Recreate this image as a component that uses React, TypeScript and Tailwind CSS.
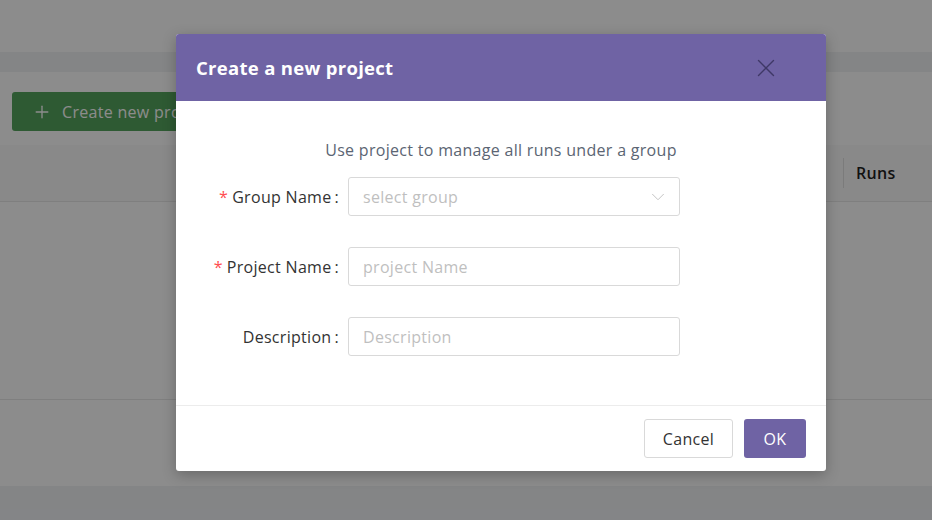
import { Plus, X, ChevronDown } from "lucide-react"

const font = { fontFamily: '"Open Sans", "Noto Sans", sans-serif' }

function Field({ label, required, placeholder, select }: { label: string; required?: boolean; placeholder: string; select?: boolean }) {
  return (
    <div className="flex items-center h-[39px]">
      <div className="w-[172px] pr-[8px] text-right text-[16px] text-[#333]">
        {required && <span className="text-[#ff4d4f] mr-[4px]">*</span>}
        {label}
        <span className="ml-[3px] mr-[1px]">:</span>
      </div>
      <div className="w-[332px] h-[39px] border border-[#d9d9d9] rounded-[3px] flex items-center justify-between pl-[14px] pr-[10px] text-[16px] text-[#bfbfbf]">
        <span>{placeholder}</span>
        {select && <ChevronDown className="w-[22px] h-[22px] text-[#bfbfbf]" strokeWidth={1} />}
      </div>
    </div>
  )
}

export default function App() {
  return (
    <div className="relative w-[932px] h-[520px] overflow-hidden bg-[#f0f2f5] tracking-[0.3px]" style={font}>
      {/* page under the mask */}
      <div className="h-[52px] bg-white"></div>
      <div className="h-[20px]"></div>
      <div className="bg-white h-[414px]">
        <div className="pt-[20px] px-[12px]">
          <button className="h-[39px] w-[200px] bg-[#55a45d] rounded-[3px] flex items-center gap-[10px] pl-[20px] text-white text-[16px] whitespace-nowrap">
            <Plus className="w-[20px] h-[20px]" strokeWidth={1.6} />
            <span>Create new project</span>
          </button>
        </div>
        <div className="mt-[14px] h-[57px] bg-[#fafafa] border-b border-[#e8e8e8] flex items-center justify-end">
          <div className="h-[30px] w-px bg-[#e0e0e0] mr-[12px]"></div>
          <div className="w-[76px] text-[16px] font-semibold text-[#1f1f1f]">Runs</div>
        </div>
        <div className="h-[198px] border-b border-[#e8e8e8]"></div>
      </div>

      <div className="absolute inset-0 bg-black/45"></div>

      {/* modal */}
      <div className="absolute left-[176px] top-[34px] w-[650px] bg-white rounded-[3px] shadow-[0_4px_14px_rgba(0,0,0,0.25)] overflow-hidden">
        <div className="h-[67px] bg-[#6f63a4] flex items-center justify-between pl-[20px] pr-[45px]">
          <div className="text-white text-[18.5px] font-bold">Create a new project</div>
          <X className="w-[30px] h-[30px] text-[#3f3866]" strokeWidth={1.1} />
        </div>
        <div className="pt-[37px] pb-[49px]">
          <div className="text-center text-[16px] text-[#5b6573] leading-[24px] mb-[15px]">Use project to manage all runs under a group</div>
          <div className="flex flex-col gap-[31px]">
            <Field label="Group Name" required placeholder="select group" select />
            <Field label="Project Name" required placeholder="project Name" />
            <Field label="Description" placeholder="Description" />
          </div>
        </div>
        <div className="border-t border-[#ececec] h-[66px] flex items-center justify-end gap-[11px] pr-[20px]">
          <button className="h-[39px] w-[89px] border border-[#d9d9d9] rounded-[3px] text-[16px] text-[#333] bg-white">Cancel</button>
          <button className="h-[39px] w-[62px] rounded-[3px] text-[16px] text-white bg-[#6f63a4]">OK</button>
        </div>
      </div>
    </div>
  )
}
